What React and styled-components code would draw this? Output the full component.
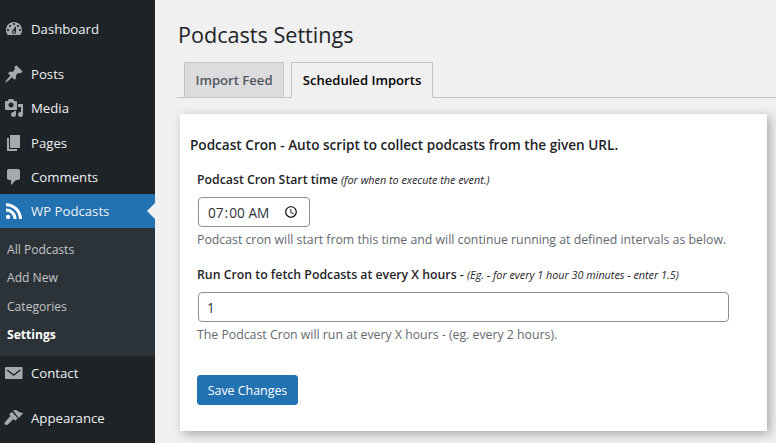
import React from "react";
import styled, { createGlobalStyle } from "styled-components";

const GlobalStyle = createGlobalStyle`
  html, body {
    margin: 0;
    padding: 0;
    background: #f0f0f1;
    overflow: hidden;
  }
`;

const Page = styled.div`
  display: flex;
  width: 776px;
  height: 443px;
  overflow: hidden;
  font-family: "Open Sans", "Noto Sans", sans-serif;
  font-size: 13.2px;
  color: #3c434a;
`;

const Sidebar = styled.nav`
  flex: 0 0 155px;
  display: flex;
  flex-direction: column;
  background: #1d2327;
  padding-top: 12px;
`;

const MenuItem = styled.div`
  position: relative;
  flex: none;
  display: flex;
  align-items: center;
  height: 34px;
  margin-bottom: ${(p) => p.$gap || 0}px;
  padding-left: 4px;
  gap: 7px;
  color: #f0f0f1;
  background: ${(p) => (p.$active ? "#2271b1" : "transparent")};

  svg {
    flex: none;
    width: 20px;
    height: 20px;
    fill: ${(p) => (p.$active ? "#ffffff" : "#a7aaad")};
  }

  ${(p) =>
    p.$active &&
    `
    &::after {
      content: "";
      position: absolute;
      right: 0;
      top: 50%;
      margin-top: -8px;
      border: 8px solid transparent;
      border-right-color: #f0f0f1;
      border-left-width: 0;
    }
  `}
`;

const SubMenu = styled.div`
  flex: none;
  display: flex;
  flex-direction: column;
  height: 128px;
  padding-top: 7.5px;
  box-sizing: border-box;
  background: #2c3338;
`;

const SubItem = styled.div`
  height: 28.5px;
  line-height: 28.5px;
  padding-left: 7px;
  font-size: 12.1px;
  color: ${(p) => (p.$current ? "#ffffff" : "#c3c4c7")};
  font-weight: ${(p) => (p.$current ? 700 : 400)};
`;

const Main = styled.main`
  flex: 1;
  min-width: 0;
  display: flex;
  flex-direction: column;
`;

const Title = styled.h1`
  margin: 20px 0 0 23px;
  font-size: 21.6px;
  line-height: 30px;
  font-weight: 400;
  color: #1d2327;
`;

const TabBar = styled.div`
  display: flex;
  align-items: flex-end;
  gap: 7px;
  height: 35px;
  margin: 12px 0 0 22px;
  padding-left: 7px;
  border-bottom: 1px solid #c3c4c7;
`;

const Tab = styled.div`
  display: flex;
  align-items: center;
  justify-content: center;
  box-sizing: border-box;
  width: ${(p) => p.$width}px;
  height: 36px;
  margin-bottom: -1px;
  font-size: 13.1px;
  font-weight: 600;
  border: 1px solid #c3c4c7;
  border-bottom-color: ${(p) => (p.$active ? "#f0f0f1" : "#c3c4c7")};
  color: ${(p) => (p.$active ? "#000000" : "#50575e")};
  background: ${(p) => (p.$active ? "#f0f0f1" : "#dcdcde")};
`;

const Card = styled.section`
  width: 587px;
  height: 317px;
  box-sizing: border-box;
  margin: 16px 0 0 25px;
  padding: 21px 10px 0;
  background: #ffffff;
  box-shadow: 3px 3px 10px rgba(0, 0, 0, 0.3);
`;

const CardTitle = styled.h2`
  margin: 0 0 15px;
  font-size: 13.6px;
  line-height: 20px;
  font-weight: 600;
  color: #1d2327;
`;

const Field = styled.div`
  display: flex;
  flex-direction: column;
  align-items: flex-start;
  margin: 0 0 ${(p) => p.$gap}px 7px;
`;

const Label = styled.label`
  font-size: 12.3px;
  line-height: 20px;
  font-weight: 600;
  color: #1d2327;
  margin-bottom: 7px;
`;

const Hint = styled.em`
  font-size: 10.8px;
  font-weight: 400;
`;

const TimeInput = styled.input`
  box-sizing: border-box;
  width: 112px;
  height: 30px;
  margin: 0 0 0 1px;
  padding: 0 8px;
  font-family: "Open Sans", "Noto Sans", sans-serif;
  font-size: 13.6px;
  color: #2c3338;
  background: #ffffff;
  border: 1px solid #8c8f94;
  border-radius: 4px;
`;

const TextInput = styled.input`
  box-sizing: border-box;
  width: 531px;
  height: 30px;
  margin: 0 0 0 1px;
  padding: 0 8px;
  font-family: "Open Sans", "Noto Sans", sans-serif;
  font-size: 13.6px;
  color: #2c3338;
  background: #ffffff;
  border: 1px solid #8c8f94;
  border-radius: 4px;
`;

const Help = styled.p`
  margin: 3px 0 0;
  font-size: 12.3px;
  line-height: 20px;
  color: #646970;
`;

const SaveButton = styled.button`
  display: block;
  width: 101px;
  height: 30px;
  margin-left: 7px;
  padding: 0;
  font-family: "Open Sans", "Noto Sans", sans-serif;
  font-size: 12.4px;
  color: #ffffff;
  background: #2271b1;
  border: 1px solid #2271b1;
  border-radius: 3px;
`;

const icons = {
  dashboard:
    "M3.76 16h12.48c1.1-1.37 1.76-3.11 1.76-5 0-4.42-3.58-8-8-8s-8 3.58-8 8c0 1.89.66 3.63 1.76 5zM10 4c.55 0 1 .45 1 1s-.45 1-1 1-1-.45-1-1 .45-1 1-1zM6 6c.55 0 1 .45 1 1s-.45 1-1 1-1-.45-1-1 .45-1 1-1zm8 0c.55 0 1 .45 1 1s-.45 1-1 1-1-.45-1-1 .45-1 1-1zm-5.37 5.55L12 7v6c0 1.1-.9 2-2 2s-2-.9-2-2c0-.57.24-1.08.63-1.45zM4 10c.55 0 1 .45 1 1s-.45 1-1 1-1-.45-1-1 .45-1 1-1zm12 0c.55 0 1 .45 1 1s-.45 1-1 1-1-.45-1-1 .45-1 1-1zm-5 3c0-.55-.45-1-1-1s-1 .45-1 1 .45 1 1 1 1-.45 1-1z",
  posts:
    "M10.44 3.02l1.82-1.82 6.36 6.35-1.83 1.82c-1.05-.68-2.48-.57-3.41.36l-.75.75c-.92.93-1.04 2.35-.35 3.41l-1.83 1.82-2.41-2.41-2.8 2.79c-.42.42-3.38 2.71-3.8 2.29s1.86-3.39 2.28-3.81l2.79-2.79L4.1 9.36l1.83-1.82c1.05.69 2.48.57 3.4-.36l.75-.75c.93-.92 1.05-2.35.36-3.41z",
  media:
    "M13 11V4c0-.55-.45-1-1-1h-1.67L9 1H5L3.67 3H2c-.55 0-1 .45-1 1v7c0 .55.45 1 1 1h10c.55 0 1-.45 1-1zM7 4.5c1.38 0 2.5 1.12 2.5 2.5S8.38 9.5 7 9.5 4.5 8.38 4.5 7 5.62 4.5 7 4.5zM14 6h5v10.5c0 1.38-1.12 2.5-2.5 2.5S14 17.88 14 16.5s1.12-2.5 2.5-2.5c.17 0 .34.02.5.05V9h-3V6zm-4 8.05V13h2v3.5c0 1.38-1.12 2.5-2.5 2.5S7 17.88 7 16.5 8.12 14 9.5 14c.17 0 .34.02.5.05z",
  pages: "M6 15V2h10v13H6zm-1 1h8v2H3V5h2v11z",
  comments:
    "M5 2h9c1.1 0 2 .9 2 2v7c0 1.1-.9 2-2 2h-2l-5 5v-5H5c-1.1 0-2-.9-2-2V4c0-1.1.9-2 2-2z",
  rss: "M14.92 18H18C18 9.32 10.82 2.25 2 2.25v3.02c7.12 0 12.92 5.71 12.92 12.73zm-5.44 0h3.08C12.56 12.27 7.82 7.6 2 7.6v3.02c2 0 3.87.77 5.29 2.16C8.7 14.17 9.48 16.03 9.48 18zm-5.35-.02c1.17 0 2.13-.93 2.13-2.09 0-1.15-.96-2.09-2.13-2.09-1.18 0-2.13.94-2.13 2.09 0 1.16.95 2.09 2.13 2.09z",
  contact:
    "M2 4h15.5a1 1 0 0 1 1 1v10a1 1 0 0 1-1 1H2a1 1 0 0 1-1-1V5a1 1 0 0 1 1-1zM3.6 6.4l-.9 1.1 7 5.6 7-5.6-.9-1.1-6.1 4.8z",
  appearance:
    "M9.2 2.6c1-.9 3-.7 4.3.2 1.3.9 2.6 2 5.8 2.3l-4.6 4.8zM7.8 3.8l6 6.4-2.6 2.6-1.9-1.9-3-3.1-1-1.3zM6.3 8l3.1 3.1-5.2 5.2c-1 1-2.7.9-3.4-.1-.6-.9-.3-1.8.5-2.4z",
};

const Icon = ({ name }) => (
  <svg viewBox="0 0 20 20" aria-hidden="true">
    <path fillRule="evenodd" d={icons[name]} />
  </svg>
);

export default function App() {
  return (
    <Page>
      <GlobalStyle />
      <Sidebar>
        <MenuItem $gap={11}>
          <Icon name="dashboard" />
          Dashboard
        </MenuItem>
        <MenuItem>
          <Icon name="posts" />
          Posts
        </MenuItem>
        <MenuItem $gap={1}>
          <Icon name="media" />
          Media
        </MenuItem>
        <MenuItem>
          <Icon name="pages" />
          Pages
        </MenuItem>
        <MenuItem>
          <Icon name="comments" />
          Comments
        </MenuItem>
        <MenuItem $active>
          <Icon name="rss" />
          WP Podcasts
        </MenuItem>
        <SubMenu>
          <SubItem>All Podcasts</SubItem>
          <SubItem>Add New</SubItem>
          <SubItem>Categories</SubItem>
          <SubItem $current>Settings</SubItem>
        </SubMenu>
        <MenuItem $gap={11}>
          <Icon name="contact" />
          Contact
        </MenuItem>
        <MenuItem>
          <Icon name="appearance" />
          Appearance
        </MenuItem>
      </Sidebar>
      <Main>
        <Title>Podcasts Settings</Title>
        <TabBar>
          <Tab $width={100}>Import Feed</Tab>
          <Tab $width={142} $active>
            Scheduled Imports
          </Tab>
        </TabBar>
        <Card>
          <CardTitle>Podcast Cron - Auto script to collect podcasts from the given URL.</CardTitle>
          <Field $gap={15}>
            <Label>
              Podcast Cron Start time <Hint>(for when to execute the event.)</Hint>
            </Label>
            <TimeInput type="time" defaultValue="07:00" />
            <Help>Podcast cron will start from this time and will continue running at defined intervals as below.</Help>
          </Field>
          <Field $gap={30}>
            <Label>
              Run Cron to fetch Podcasts at every X hours - <Hint>(Eg. - for every 1 hour 30 minutes - enter 1.5)</Hint>
            </Label>
            <TextInput type="text" defaultValue="1" />
            <Help>The Podcast Cron will run at every X hours - (eg. every 2 hours).</Help>
          </Field>
          <SaveButton type="button">Save Changes</SaveButton>
        </Card>
      </Main>
    </Page>
  );
}
